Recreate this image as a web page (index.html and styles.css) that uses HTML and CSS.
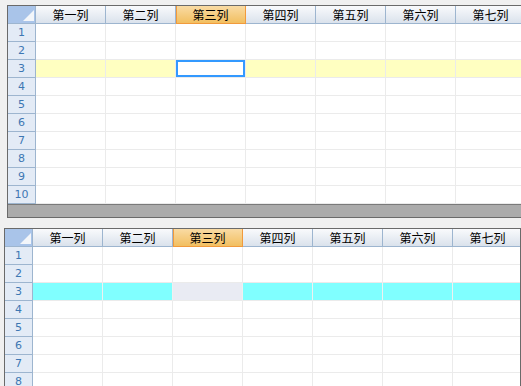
FILE: index.html
```html
<!DOCTYPE html>
<html lang="zh-CN">
<head>
<meta charset="utf-8">
<title>表格</title>
<link rel="stylesheet" href="styles.css">
</head>
<body>
  <div class="sheet sheet-top">
    <div class="row head">
      <div class="corner"><span class="tri"></span></div>
      <div class="colhead">第一列</div>
      <div class="colhead">第二列</div>
      <div class="colhead active">第三列</div>
      <div class="colhead">第四列</div>
      <div class="colhead">第五列</div>
      <div class="colhead">第六列</div>
      <div class="colhead">第七列</div>
    </div>
    <div class="row"><div class="rowhead">1</div><div class="cell"></div><div class="cell"></div><div class="cell"></div><div class="cell"></div><div class="cell"></div><div class="cell"></div><div class="cell"></div></div>
    <div class="row"><div class="rowhead">2</div><div class="cell"></div><div class="cell"></div><div class="cell"></div><div class="cell"></div><div class="cell"></div><div class="cell"></div><div class="cell"></div></div>
    <div class="row row-yellow"><div class="rowhead">3</div><div class="cell"></div><div class="cell"></div><div class="cell current"></div><div class="cell"></div><div class="cell"></div><div class="cell"></div><div class="cell"></div></div>
    <div class="row"><div class="rowhead">4</div><div class="cell"></div><div class="cell"></div><div class="cell"></div><div class="cell"></div><div class="cell"></div><div class="cell"></div><div class="cell"></div></div>
    <div class="row"><div class="rowhead">5</div><div class="cell"></div><div class="cell"></div><div class="cell"></div><div class="cell"></div><div class="cell"></div><div class="cell"></div><div class="cell"></div></div>
    <div class="row"><div class="rowhead">6</div><div class="cell"></div><div class="cell"></div><div class="cell"></div><div class="cell"></div><div class="cell"></div><div class="cell"></div><div class="cell"></div></div>
    <div class="row"><div class="rowhead">7</div><div class="cell"></div><div class="cell"></div><div class="cell"></div><div class="cell"></div><div class="cell"></div><div class="cell"></div><div class="cell"></div></div>
    <div class="row"><div class="rowhead">8</div><div class="cell"></div><div class="cell"></div><div class="cell"></div><div class="cell"></div><div class="cell"></div><div class="cell"></div><div class="cell"></div></div>
    <div class="row"><div class="rowhead">9</div><div class="cell"></div><div class="cell"></div><div class="cell"></div><div class="cell"></div><div class="cell"></div><div class="cell"></div><div class="cell"></div></div>
    <div class="row"><div class="rowhead">10</div><div class="cell"></div><div class="cell"></div><div class="cell"></div><div class="cell"></div><div class="cell"></div><div class="cell"></div><div class="cell"></div></div>
    <div class="hscroll"></div>
  </div>

  <div class="sheet sheet-bottom">
    <div class="row head">
      <div class="corner"><span class="tri"></span></div>
      <div class="colhead">第一列</div>
      <div class="colhead">第二列</div>
      <div class="colhead active">第三列</div>
      <div class="colhead">第四列</div>
      <div class="colhead">第五列</div>
      <div class="colhead">第六列</div>
      <div class="colhead">第七列</div>
    </div>
    <div class="row"><div class="rowhead">1</div><div class="cell"></div><div class="cell"></div><div class="cell"></div><div class="cell"></div><div class="cell"></div><div class="cell"></div><div class="cell"></div></div>
    <div class="row"><div class="rowhead">2</div><div class="cell"></div><div class="cell"></div><div class="cell"></div><div class="cell"></div><div class="cell"></div><div class="cell"></div><div class="cell"></div></div>
    <div class="row row-cyan"><div class="rowhead">3</div><div class="cell"></div><div class="cell"></div><div class="cell focus"></div><div class="cell"></div><div class="cell"></div><div class="cell"></div><div class="cell"></div></div>
    <div class="row"><div class="rowhead">4</div><div class="cell"></div><div class="cell"></div><div class="cell"></div><div class="cell"></div><div class="cell"></div><div class="cell"></div><div class="cell"></div></div>
    <div class="row"><div class="rowhead">5</div><div class="cell"></div><div class="cell"></div><div class="cell"></div><div class="cell"></div><div class="cell"></div><div class="cell"></div><div class="cell"></div></div>
    <div class="row"><div class="rowhead">6</div><div class="cell"></div><div class="cell"></div><div class="cell"></div><div class="cell"></div><div class="cell"></div><div class="cell"></div><div class="cell"></div></div>
    <div class="row"><div class="rowhead">7</div><div class="cell"></div><div class="cell"></div><div class="cell"></div><div class="cell"></div><div class="cell"></div><div class="cell"></div><div class="cell"></div></div>
    <div class="row"><div class="rowhead">8</div><div class="cell"></div><div class="cell"></div><div class="cell"></div><div class="cell"></div><div class="cell"></div><div class="cell"></div><div class="cell"></div></div>
  </div>
</body>
</html>
```

FILE: styles.css
```css
html, body {
  margin: 0;
  padding: 0;
  overflow: hidden;
  height: 100%;
}

body {
  background: #f0f0f0;
  font-family: "Noto Sans CJK SC", "DejaVu Sans", sans-serif;
  font-size: 12px;
}

/* grid frame */
.sheet {
  border: 1px solid #6a6a6a;
  background: #fff;
  overflow: hidden;
}

.sheet-top {
  margin: 5px 0 0 7px;
  width: 530px;
}

.sheet-bottom {
  margin: 10px 0 0 4px;
  width: 515px;
}

.row {
  display: flex;
  height: 18px;
}

/* column header strip */
.corner {
  flex: 0 0 27px;
  height: 17px;
  border-right: 1px solid #9db5cf;
  border-bottom: 1px solid #9db5cf;
  background: #a9c4e9;
  display: flex;
  align-items: flex-end;
  justify-content: flex-end;
}

.tri {
  width: 0;
  height: 0;
  margin: 0 1px 2px 0;
  border-left: 11px solid transparent;
  border-bottom: 11px solid #f3f6fa;
}

.colhead {
  flex: 0 0 69px;
  height: 17px;
  border-right: 1px solid #9db5cf;
  border-bottom: 1px solid #9db5cf;
  background: linear-gradient(#f9fafc, #dae2ec);
  color: #000;
  text-align: center;
  line-height: 17px;
  font-size: 12px;
}

.colhead.active {
  background: linear-gradient(#f9dba4, #f2bf60);
  border-right-color: #f19a3c;
  border-bottom-color: #f19a3c;
  box-shadow: inset 1px 0 0 #f19a3c;
}

/* row header column */
.rowhead {
  flex: 0 0 27px;
  height: 17px;
  border-right: 1px solid #9db5cf;
  border-bottom: 1px solid #9db5cf;
  background: #e3ebf6;
  color: #3d77b3;
  text-align: center;
  line-height: 17px;
  font-family: "DejaVu Sans", sans-serif;
  font-size: 11px;
}

/* body cells */
.cell {
  flex: 0 0 69px;
  height: 17px;
  border-right: 1px solid #ebebeb;
  border-bottom: 1px solid #ebebeb;
}

.row-yellow .cell {
  background: #ffffc1;
}

.row-yellow .cell.current {
  background: #fff;
  box-shadow: inset 0 0 0 2px #3399ff;
}

.row-cyan .cell {
  background: #80ffff;
  border-right-color: #f0f0f0;
}

.row-cyan .cell.focus {
  background: #e9ebf3;
}

/* horizontal scroll strip */
.hscroll {
  height: 12px;
  border-top: 1px solid #7a7a7a;
  background: #ababab;
}
```
